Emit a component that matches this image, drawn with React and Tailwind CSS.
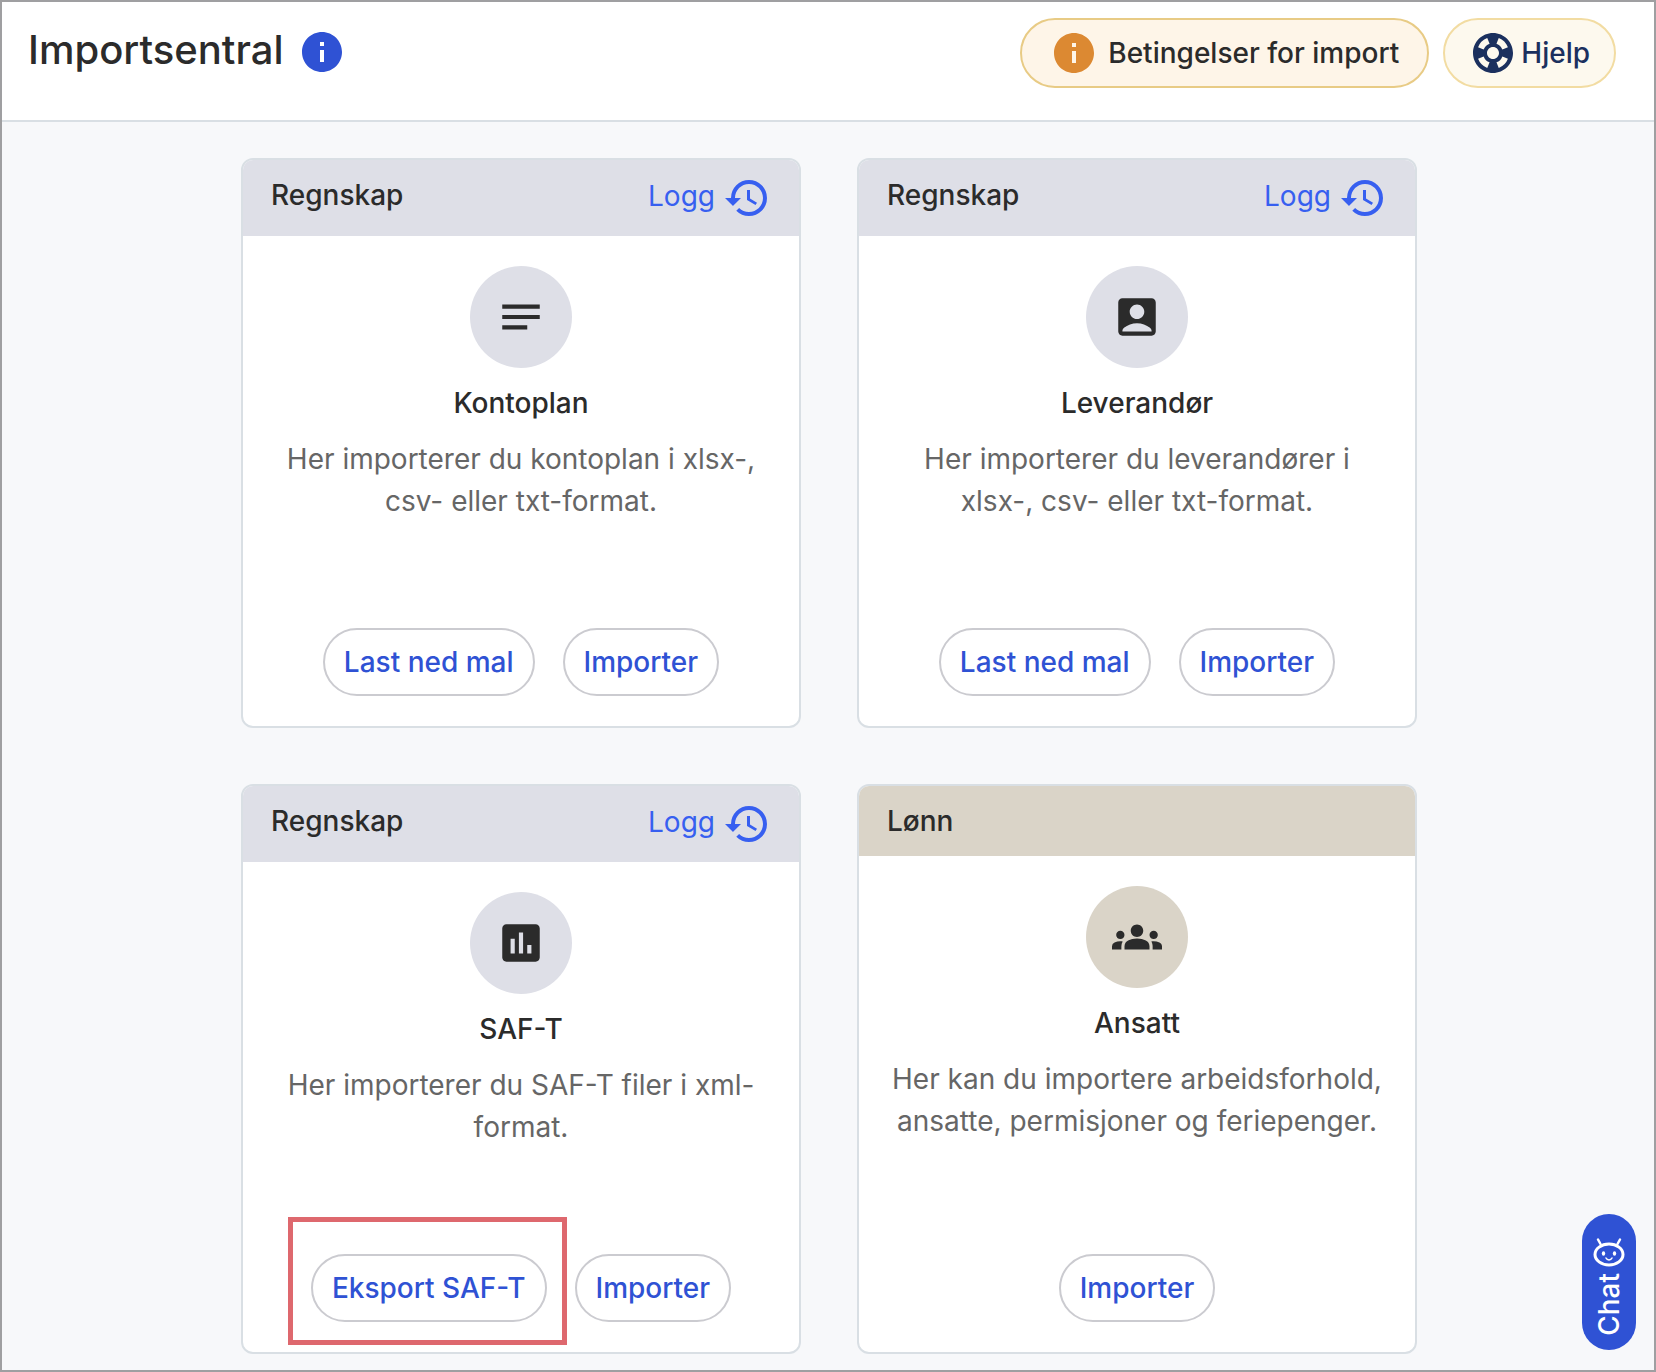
import {
  MdAccountBox,
  MdAssessment,
  MdGroups,
  MdHistory,
  MdInfo,
  MdNotes,
  MdSupport,
} from 'react-icons/md';

const cards = [
  {
    id: 'kontoplan',
    category: 'Regnskap',
    title: 'Kontoplan',
    text: 'Her importerer du kontoplan i xlsx-, csv- eller txt-format.',
    icon: MdNotes,
    log: true,
    actions: [{ label: 'Last ned mal' }, { label: 'Importer' }],
  },
  {
    id: 'leverandor',
    category: 'Regnskap',
    title: 'Leverandør',
    text: 'Her importerer du leverandører i xlsx-, csv- eller txt-format.',
    icon: MdAccountBox,
    log: true,
    actions: [{ label: 'Last ned mal' }, { label: 'Importer' }],
  },
  {
    id: 'saft',
    category: 'Regnskap',
    title: 'SAF-T',
    text: 'Her importerer du SAF-T filer i xml-format.',
    icon: MdAssessment,
    log: true,
    actions: [{ label: 'Eksport SAF-T', highlight: true }, { label: 'Importer' }],
  },
  {
    id: 'ansatt',
    category: 'Lønn',
    title: 'Ansatt',
    text: 'Her kan du importere arbeidsforhold, ansatte, permisjoner og feriepenger.',
    icon: MdGroups,
    log: false,
    actions: [{ label: 'Importer' }],
  },
];

const ChatBot = () => (
  <svg width="32" height="30" viewBox="0 0 32 30" fill="none" stroke="white" strokeLinecap="round">
    <ellipse cx="16" cy="17.5" rx="14" ry="10.5" strokeWidth="3" />
    <path d="M7.5 7 5 2.500M24.500 7 27 2.500" strokeWidth="2.500" />
    <path d="M13 21c1.200 2.500 4.800 2.500 6 0" strokeWidth="1.500" />
    <ellipse cx="10.500" cy="16.500" rx="1.700" ry="2.200" fill="white" stroke="none" />
    <ellipse cx="21.500" cy="16.500" rx="1.700" ry="2.200" fill="white" stroke="none" />
  </svg>
);

const ImportCard = ({ card }) => {
  const Icon = card.icon;
  const color = card.category === 'Lønn' ? 'bg-[#dad4c8]' : 'bg-[#dedfe7]';

  return (
    <section className="flex min-h-[570px] flex-col overflow-hidden rounded-xl border-2 border-[#d9dfe4] bg-white">
      <div className={`flex items-start justify-between px-7 py-[14px] ${color}`}>
        <h2 className="leading-[42px] font-medium">{card.category}</h2>
        {card.log && (
          <a href="#logg" className="flex items-start gap-2 leading-[44px] text-[#375ff0]">
            Logg
            <MdHistory size={48} />
          </a>
        )}
      </div>
      <div className="flex flex-1 flex-col items-center px-7 py-[30px] text-center">
        <div className={`flex size-[102px] items-center justify-center rounded-full ${color}`}>
          <Icon size={50} />
        </div>
        <h3 className="mt-[14px] leading-[42px] font-medium">{card.title}</h3>
        <p className="mt-[14px] leading-[42px] text-[#666666]">{card.text}</p>
        <div className="mt-auto flex gap-7">
          {card.actions.map((action) => (
            <div key={action.label} className="relative">
              <button
                type="button"
                className="h-[68px] rounded-full border-2 border-[#cbcbd0] px-[19px] font-medium text-[#2f52d4]"
              >
                {action.label}
              </button>
              {action.highlight && (
                <div className="pointer-events-none absolute -top-[37px] -right-5 -bottom-[23px] -left-[23px] border-5 border-[#de686e]" />
              )}
            </div>
          ))}
        </div>
      </div>
    </section>
  );
};

const App = () => {
  return (
    <div className="min-h-screen border-2 border-[#9f9fa1] bg-[#f7f8fa] font-['Inter',sans-serif] text-[28px] text-[#2b2b2b]">
      <header className="flex items-start justify-between border-b-2 border-[#d9dfe4] bg-white pt-4 pr-[38px] pb-8 pl-[26px]">
        <div className="flex items-start gap-[14px] pt-[10px]">
          <h1 className="text-[40px] leading-[44px] font-medium">Importsentral</h1>
          <button type="button" aria-label="Informasjon" className="text-[#2f52d4]">
            <MdInfo size={48} />
          </button>
        </div>
        <div className="flex gap-[14px]">
          <button
            type="button"
            className="flex h-[70px] items-center gap-[10px] rounded-full border-2 border-[#e8cb85] bg-[#fef5e8] px-7 font-medium"
          >
            <MdInfo size={48} className="text-[#dc8932]" />
            Betingelser for import
          </button>
          <button
            type="button"
            className="flex h-[70px] items-center gap-1 rounded-full border-2 border-[#f2dca2] bg-[#fdf9ee] px-6 font-medium text-[#1b305e]"
          >
            <MdSupport size={48} />
            Hjelp
          </button>
        </div>
      </header>
      <main className="mx-auto grid max-w-[1178px] grid-cols-2 gap-14 pt-9 pb-4 pl-0.5">
        {cards.map((card) => (
          <ImportCard key={card.id} card={card} />
        ))}
      </main>
      <button
        type="button"
        className="fixed right-5 bottom-[22px] flex h-[136px] w-[54px] flex-col items-center justify-center gap-[6px] rounded-full bg-[#2f52d4] pt-2 font-medium text-white"
      >
        <ChatBot />
        <span className="rotate-180 leading-8 [writing-mode:vertical-rl]">Chat</span>
      </button>
    </div>
  );
};

export default App;
